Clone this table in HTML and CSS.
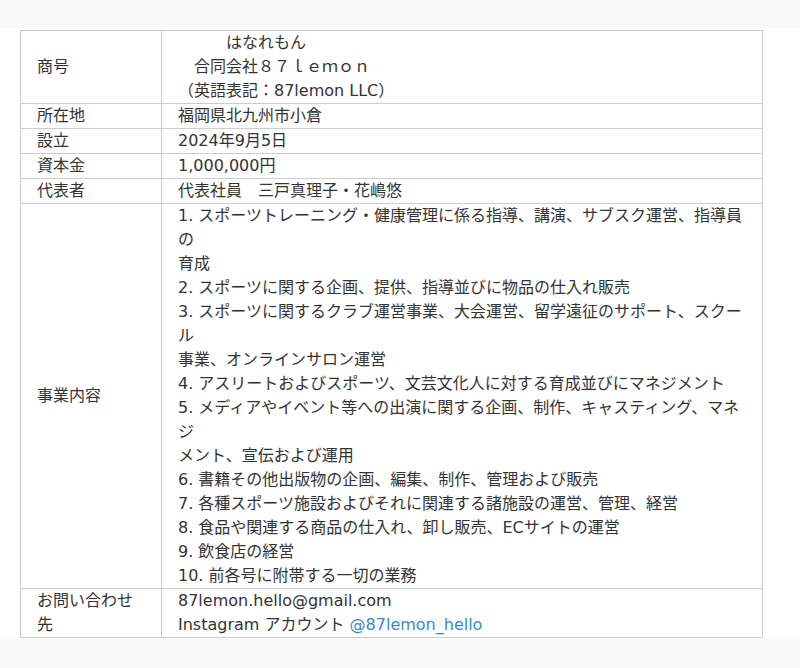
FILE: index.html
```
<!DOCTYPE html>
<html lang="ja">
<head>
<meta charset="utf-8">
<link rel="stylesheet" href="styles.css">
</head>
<body>
<div class="top-band"></div>
<section class="company">
  <table class="info">
    <tr>
      <th>商号</th>
      <td>　　　はなれもん<br>　合同会社８７ｌｅｍｏｎ<br>（英語表記：87lemon LLC）</td>
    </tr>
    <tr>
      <th>所在地</th>
      <td>福岡県北九州市小倉</td>
    </tr>
    <tr>
      <th>設立</th>
      <td>2024年9月5日</td>
    </tr>
    <tr>
      <th>資本金</th>
      <td>1,000,000円</td>
    </tr>
    <tr>
      <th>代表者</th>
      <td>代表社員　三戸真理子・花嶋悠</td>
    </tr>
    <tr>
      <th>事業内容</th>
      <td>1. スポーツトレーニング・健康管理に係る指導、講演、サブスク運営、指導員の<br>育成<br>2. スポーツに関する企画、提供、指導並びに物品の仕入れ販売<br>3. スポーツに関するクラブ運営事業、大会運営、留学遠征のサポート、スクール<br>事業、オンラインサロン運営<br>4. アスリートおよびスポーツ、文芸文化人に対する育成並びにマネジメント<br>5. メディアやイベント等への出演に関する企画、制作、キャスティング、マネジ<br>メント、宣伝および運用<br>6. 書籍その他出版物の企画、編集、制作、管理および販売<br>7. 各種スポーツ施設およびそれに関連する諸施設の運営、管理、経営<br>8. 食品や関連する商品の仕入れ、卸し販売、ECサイトの運営<br>9. 飲食店の経営<br>10. 前各号に附帯する一切の業務</td>
    </tr>
    <tr>
      <th>お問い合わせ先</th>
      <td>87lemon.hello@gmail.com<br>Instagram アカウント <a class="link" href="#">@87lemon_hello</a></td>
    </tr>
  </table>
</section>
</body>
</html>
```
FILE: styles.css
```
html, body {
  margin: 0;
  padding: 0;
}
body {
  background: #f9f9f9;
  font-family: "DejaVu Sans", "Noto Sans CJK KR", sans-serif;
  font-size: 16px;
  line-height: 24px;
  color: #333;
}
.top-band {
  height: 28px;
}
.company {
  background: #fff;
  padding: 2px 0 1px 20px;
}
.info {
  border-collapse: collapse;
  width: 743px;
}
.info th,
.info td {
  border: 1px solid #ccc;
  padding: 0 16px;
  text-align: left;
  vertical-align: middle;
  font-weight: normal;
}
.info th {
  width: 108px;
}
.link {
  color: #3d88c4;
  text-decoration: none;
}
```
